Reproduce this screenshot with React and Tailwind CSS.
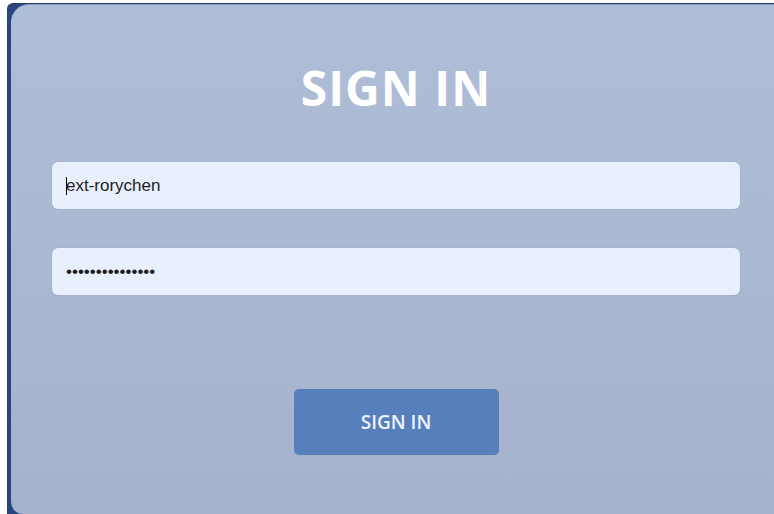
import React from 'react';

// 登录面板：标题、账号/密码输入框、登录按钮
function Field({ children }) {
    return (
        <div className="h-[47px] w-full rounded-[6px] bg-[#e9f0fd] shadow-[0_0_1px_rgba(60,80,120,0.35)] flex items-center pl-[14px] text-[17px] text-[#1d1d1d] font-['Liberation_Sans',Arial,sans-serif]">
            {children}
        </div>
    );
}

export default function App() {
    return (
        <div className="w-[774px] h-[514px] bg-white pl-[7px] pt-[3px] overflow-hidden">
            {/* 外框 */}
            <div className="h-full bg-[#28467d] rounded-tl-[6px] border-t border-[#2c3a55] pl-[4px]">
                <div className="h-full border-t border-[#7f9acb] rounded-tl-[18px] rounded-bl-[12px] bg-gradient-to-b from-[#afbed8] to-[#a5b2cb] pt-[59px] pl-[41px] pr-[34px] flex flex-col items-center">
                    <h1 className="text-[48px] leading-[48px] font-bold tracking-[1px] text-white font-['Open_Sans',sans-serif]">
                        SIGN IN
                    </h1>

                    <div className="w-full mt-[50px]">
                        <Field>
                            <span className="w-[1px] h-[18px] bg-black -mr-[1px]" />
                            <span>ext-rorychen</span>
                        </Field>
                    </div>

                    <div className="w-full mt-[39px]">
                        <Field>
                            <span>•••••••••••••••</span>
                        </Field>
                    </div>

                    <button className="mt-[94px] w-[205px] h-[66px] rounded-[5px] bg-[#567fbb] text-[#eef3fb] text-[19px] font-semibold font-['Open_Sans',sans-serif]">
                        SIGN IN
                    </button>
                </div>
            </div>
        </div>
    );
}
